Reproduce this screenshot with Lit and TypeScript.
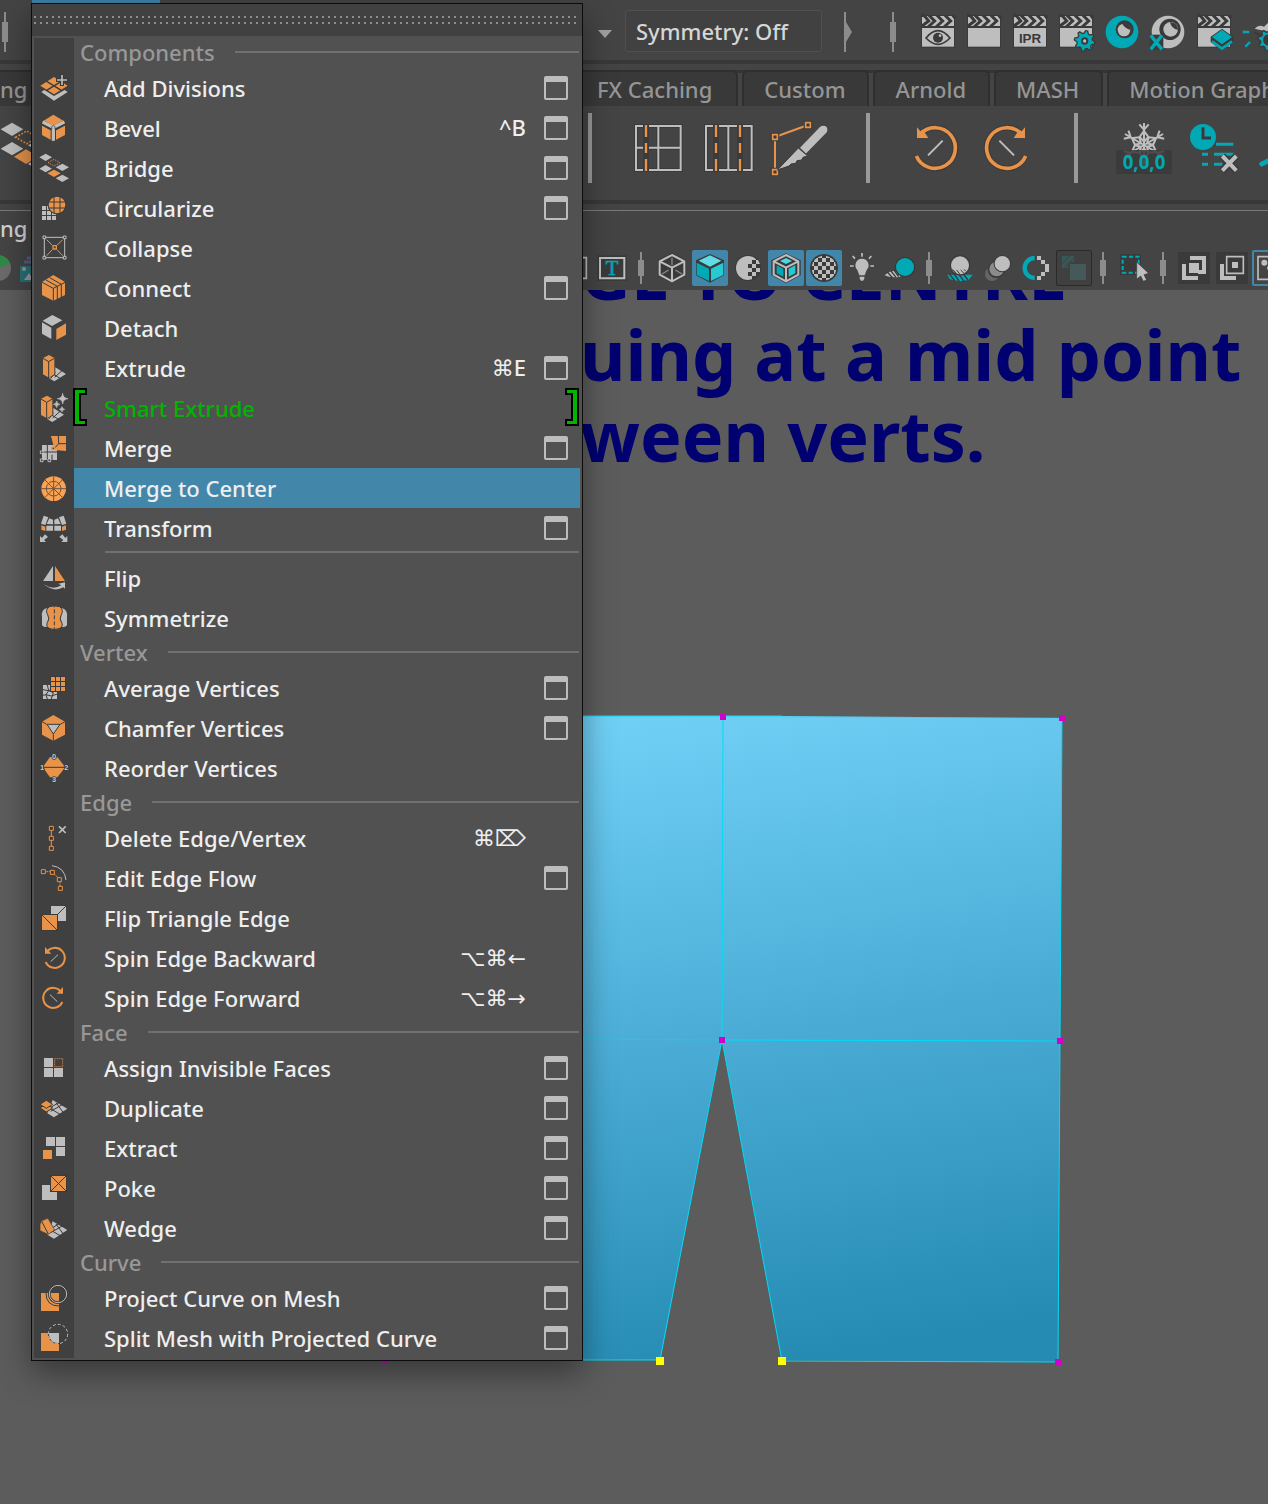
import { LitElement, html, svg, css, nothing, SVGTemplateResult } from "lit";
import { customElement, property } from "lit/decorators.js";

const O = "#e8934a";
const G = "#bebebe";
const D = "#3a3a3a";
const T = "#00a9b5";

const rhomb = (x: number, y: number, w: number, h: number) =>
  `M${x - w} ${y}L${x} ${y - h}L${x + w} ${y}L${x} ${y + h}Z`;
const box = (x: number, y: number, r: number) => `M${x - r} ${y - r}h${2 * r}v${2 * r}h${-2 * r}Z`;
const grid = (x: number, y: number, size: number, pitch: number, n: number) => {
  let d = "";
  for (let i = 0; i < n; i++) for (let j = 0; j < n; j++) d += `M${x + i * pitch} ${y + j * pitch}h${size}v${size}h${-size}Z`;
  return d;
};
const star = (x: number, y: number, r: number) =>
  `M${x} ${y - r}Q${x + 1} ${y - 1} ${x + r} ${y}Q${x + 1} ${y + 1} ${x} ${y + r}Q${x - 1} ${y + 1} ${x - r} ${y}Q${x - 1} ${y - 1} ${x} ${y - r}Z`;
const gear = (x: number, y: number, r: number) => {
  const pts: string[] = [];
  for (let i = 0; i < 32; i++) {
    const a = ((i + 0.5) * Math.PI) / 16;
    const q = i % 4 < 2 ? r : r * 0.76;
    pts.push(`${(x + q * Math.cos(a)).toFixed(1)} ${(y + q * Math.sin(a)).toFixed(1)}`);
  }
  return "M" + pts.join("L") + "Z";
};

const floorTiles = svg`<path d="M56 36L100 62L60 88L40 76Z" fill=${G}/><path d="M50 70L88 48M44 62L74 44M66 44L88 74M46 60L80 80" stroke=${D} stroke-width="3"/>`;
const prism = svg`<path d="M45 21L61 30V79L45 89L27 79V30Z" fill=${O}/><path d="M27 31L44 41L61 31M44 41V90" fill="none" stroke=${D} stroke-width="3"/>`;
const prismFloor = svg`<path d="M64 58L96 78L61 100L45 91L64 80Z" fill=${G}/><path d="M60 80L80 92M62 88L84 68M64 72L50 92" stroke=${D} stroke-width="3"/>`;
const spin = svg`<path d="M38 42A30 30 0 1 1 35 72" fill="none" stroke=${O} stroke-width="6"/><path d="M33 27V47H52Z" fill=${O}/><path d="M50 71L72 50" stroke=${G} stroke-width="3"/>`;
const transformHalf = svg`<path d="M29 23L43 28L34 51L21 47Z" fill=${G}/><path d="M22 52L34 56V69L22 65Z" fill=${O}/><path d="M46 31L57 35V49L38 48ZM37 53H57V68H37Z" fill=${G}/><path d="M18 102V84L24 90L33 79L42 87L30 96L36 102Z" fill=${G}/>`;

const menuIcons: Record<string, SVGTemplateResult> = {
  divisions: svg`<path d="M22 72L60 98L101 72L92 66L60 84L31 66Z" fill=${G}/><path d="M19 53L60 27L101 53L60 79Z" fill=${O}/><path d="M38 40L82 67M82 40L38 67" stroke=${D} stroke-width="4"/><path d="M84 18V54M66 36H102" stroke=${D} stroke-width="12"/><path d="M84 21V51M69 36H99" stroke=${G} stroke-width="5"/>`,
  bevel: svg`<path d="M58 20L93 41V81L58 100L24 81V41Z" fill=${O}/><path d="M24 44L58 62L93 44M58 60V98" fill="none" stroke=${D} stroke-width="16"/><path d="M26 42L58 58L91 42M58 60V98" fill="none" stroke=${G} stroke-width="10"/><path d="M53 64V56L58 52L63 56V64" fill="none" stroke=${D} stroke-width="2"/>`,
  bridge: svg`<path d=${rhomb(35, 28, 19, 11) + rhomb(85, 58, 20, 11) + rhomb(35, 62, 19, 11) + rhomb(85, 91, 20, 11)} fill=${G}/><path d=${rhomb(60, 44, 18, 10)} fill="none" stroke=${O} stroke-width="3" stroke-dasharray="3 3"/><path d=${rhomb(60, 76, 20, 11)} fill=${O}/>`,
  circularize: svg`<path d=${grid(24, 54, 12, 15, 3)} fill=${G}/><circle cx="69" cy="51" r="28" fill=${D}/><circle cx="69" cy="51" r="25" fill=${O}/><path d="M60 26V76M78 26V76M44 42H94M44 60H94" stroke=${D} stroke-width="3"/>`,
  collapse: svg`<path d="M31 28H92V89H31Z" fill="none" stroke=${G} stroke-width="3"/><path d=${box(31, 28, 4) + box(92, 28, 4) + box(31, 89, 4) + box(92, 89, 4)} fill=${D} stroke=${G} stroke-width="3"/><path d="M38 35L54 51M86 35L70 51M38 83L54 66M86 83L70 66" stroke=${O} stroke-width="3"/><path d=${box(62, 58, 5)} fill="none" stroke=${O} stroke-width="4"/>`,
  connect: svg`<path d="M58 21L93 42V81L58 98L24 81V42Z" fill=${O}/><path d="M24 43L58 61V98M58 61L93 43M36 36L70 55V93M47 29L82 49V87" fill="none" stroke=${D} stroke-width="3"/>`,
  detach: svg`<path d="M55 21L85 37L54 54L26 38ZM24 43L52 59V93L24 77Z" fill=${G}/><path d="M67 63L96 46V80L67 96Z" fill=${O}/>`,
  extrude: svg`${prismFloor}${prism}`,
  smart: svg`<g transform="translate(-6 2)">${prismFloor}${prism}</g><path d=${star(86, 32, 16) + star(68, 49, 10) + star(84, 64, 8)} fill=${G} stroke=${G} stroke-width="2"/>`,
  merge: svg`<path d="M24 51H69V96H24Z" fill=${G}/><path d="M40 51V96M24 72H69M54 80V96" stroke=${D} stroke-width="3"/><path d="M51 24H96V69L62 66Z" fill=${O}/><path d="M73 24L74 47L62 60M74 47H96" fill="none" stroke=${D} stroke-width="3"/><path d=${box(58, 61, 4)} fill=${D} stroke=${O} stroke-width="4"/><path d=${box(23, 73, 4) + box(23, 97, 4) + box(46, 97, 4)} fill=${D} stroke=${G} stroke-width="3"/>`,
  center: svg`<circle cx="59" cy="62" r="37" fill="#f9a254"/><circle cx="59" cy="62" r="22" fill="none" stroke="#6d5540" stroke-width="3"/><path d="M22 62H96M59 25V99M33 36L85 88M85 36L33 88" stroke="#6d5540" stroke-width="3"/>`,
  transform: svg`${transformHalf}<g transform="translate(118 0) scale(-1 1)">${transformHalf}</g>`,
  flip: svg`<path d="M57 24V69H27Z" fill=${G}/><path d="M63 24L93 69H63Z" fill=${O}/><path d="M29 79Q58 98 82 82L73 77L93 73V92L88 88Q60 104 29 79Z" fill=${G}/>`,
  symmetrize: svg`<path d="M40 30Q20 34 24 58V82Q30 90 40 86L44 58ZM82 30Q102 34 99 58V82Q93 90 83 86L79 58Z" fill=${G}/><path d="M46 26Q61 21 77 26Q90 36 82 50Q74 62 84 76Q88 88 74 92Q61 97 48 92Q36 88 39 76Q49 62 41 50Q32 36 46 26Z" fill=${O} stroke=${D} stroke-width="3"/><path d="M61 16V104" stroke=${D} stroke-width="3" stroke-dasharray="12 6"/>`,
  average: svg`<path d="M27 51H69V93H27Z" fill=${G}/><path d="M27 65L44 68L56 62M40 51L44 68L36 80L40 93M27 82L36 80L52 84L70 78M44 68L58 74L52 93" fill="none" stroke=${D} stroke-width="3"/><path d="M48 24H96V72H48Z" fill=${D}/><path d=${grid(51, 27, 12, 15, 3)} fill=${O}/>`,
  chamfer: svg`<path d="M58 21L93 41V80L58 98L24 80V41Z" fill=${O}/><path d="M24 41L38 49M93 41L79 49M58 79V98" stroke=${D} stroke-width="3"/><path d="M39 49H78L58 78Z" fill=${G} stroke=${D} stroke-width="3"/>`,
  reorder: svg`<path d="M48 27H70L94 58L70 88H48L26 58Z" fill=${O}/><path d="M26 58H94" stroke=${D} stroke-width="3"/><g class="digits"><text x="60" y="34">0</text><text x="24" y="66">1</text><text x="97" y="66">2</text><text x="60" y="102">3</text></g>`,
  delete: svg`<path d="M52 31V91" stroke=${O} stroke-width="3"/><path d=${box(52, 31, 6) + box(52, 61, 6) + box(52, 91, 6)} fill=${D} stroke=${O} stroke-width="3"/><path d="M75 25L95 45M95 25L75 45" stroke=${G} stroke-width="5"/>`,
  flow: svg`<path d="M28 41H50M60 48L76 62M78 70V88" stroke=${O} stroke-width="3" stroke-dasharray="6 3"/><path d=${box(28, 41, 6) + box(55, 43, 6) + box(76, 65, 6) + box(79, 91, 6)} fill=${D} stroke=${O} stroke-width="3"/><path d="M54 23Q92 28 96 66" fill="none" stroke=${G} stroke-width="3"/>`,
  triangle: svg`<path d="M51 24H96V69H51Z" fill=${G}/><path d="M96 24L51 69" stroke=${D} stroke-width="3"/><path d="M21 48H72V99H21Z" fill=${D}/><path d="M24 51H69V96H24Z" fill=${O}/><path d="M24 51L69 96" stroke=${D} stroke-width="3"/>`,
  back: spin,
  forward: svg`<g transform="translate(120 0) scale(-1 1)">${spin}</g>`,
  invisible: svg`<path d="M30 30h27v27h-27ZM30 60h27v27h-27ZM60 60h27v27h-27Z" fill=${G}/><path d="M62 32h24v24h-24Z" fill="none" stroke=${O} stroke-width="3" stroke-dasharray="3 3"/>`,
  duplicate: svg`${floorTiles}<path d=${rhomb(37, 60, 19, 12)} fill=${O} stroke=${D} stroke-width="3"/><path d=${rhomb(37, 49, 19, 12)} fill=${O} stroke=${D} stroke-width="3"/>`,
  extract: svg`<path d="M36 27h27v27h-27ZM66 27h27v27h-27ZM66 57h27v27h-27Z" fill=${G}/><path d="M27 66h27v27h-27Z" fill=${O}/>`,
  poke: svg`<path d="M24 51h45v45h-45Z" fill=${G}/><path d="M48 21h51v51h-51Z" fill=${D}/><path d="M51 24h45v45h-45Z" fill=${O}/><path d="M51 24L96 69M96 24L51 69" stroke=${D} stroke-width="3"/>`,
  wedge: svg`<g transform="translate(0 4)">${floorTiles}</g><path d="M18 48Q24 34 42 31L62 66L42 79L18 68Z" fill=${O} stroke=${D} stroke-width="2"/><path d="M24 42L43 78" stroke=${D} stroke-width="3"/>`,
  project: svg`<path d="M21 45h54v54h-54Z" fill=${O}/><path d="M36 45Q36 84 75 84M44 45Q44 76 75 76" fill="none" stroke=${D} stroke-width="3"/><circle cx="72" cy="48" r="26" fill="none" stroke=${D} stroke-width="8"/><circle cx="72" cy="48" r="26" fill="none" stroke=${G} stroke-width="3"/>`,
  split: svg`<path d="M21 45h54v54h-54Z" fill=${O}/><path d="M44 45H75V78Q46 76 44 45Z" fill=${G}/><circle cx="72" cy="48" r="29" fill="none" stroke=${D} stroke-width="3"/><circle cx="72" cy="48" r="29" fill="none" stroke=${G} stroke-width="3" stroke-dasharray="9 6"/>`,
};

const slate = (y: number) => svg`<path d="M3 3H105V101H3Z" fill=${D}/><path d="M6 6H102V36H6Z" fill=${G}/>
  <path d="M3 3L14 6L26 21L6 36M26 3L44 21L24 39M50 3L68 21L48 39M74 3L92 21L72 39M98 3L106 14" fill="none" stroke=${D} stroke-width="9"/><path d="M6 ${y}H102V98H6Z" fill=${G}/>`;
const cubeEdge = "M54 15L91 34V74L54 94L17 74V34Z";
const checks = (x: number, y: number, n: number, m: number, s: number) => {
  let d = "";
  for (let i = 0; i < n; i++) for (let j = 0; j < m; j++) if ((i + j) % 2 === 0) d += `M${x + i * s} ${y + j * s}h${s}v${s}h${-s}Z`;
  return d;
};

const statusIcons: [string, SVGTemplateResult][] = [
  ["Render view", svg`${slate(42)}<path d="M18 72Q54 28 90 72Q54 110 18 72Z" fill=${G} stroke=${D} stroke-width="5"/><circle cx="54" cy="71" r="15" fill=${D}/><circle cx="60" cy="65" r="4" fill=${G}/>`],
  ["Render frame", slate(42)],
  ["IPR render", svg`${slate(42)}<text class="ipr" x="54" y="87">IPR</text>`],
  ["Render settings", svg`${slate(42)}<path d=${gear(80, 81, 31)} fill=${T} stroke=${D} stroke-width="4"/><circle cx="80" cy="81" r="11" fill=${D}/><circle cx="80" cy="81" r="5" fill=${G}/>`],
  ["Hypershade", svg`<circle cx="54" cy="54" r="49" fill=${T}/><circle cx="62" cy="46" r="27" fill=${D}/><circle cx="60" cy="48" r="19" fill=${G}/><path d="M54 28Q62 44 80 48A21 21 0 0 0 54 28Z" fill=${D}/>`],
  ["Light editor", svg`<circle cx="54" cy="54" r="49" fill=${G}/><circle cx="60" cy="46" r="32" fill=${D}/><circle cx="62" cy="46" r="22" fill=${G}/><path d="M60 25Q64 44 84 48A22 22 0 0 0 60 25Z" fill=${D}/><path d="M-1 62H40V108H-1Z" fill=${D}/><path d="M2 64L36 106M36 64L2 106" stroke=${T} stroke-width="10"/>`],
  ["Render layers", svg`${slate(42)}<path d="M78 44L112 68V84L78 110L44 84V68Z" fill=${D}/><path d="M78 47L108 69L78 91L48 69Z" fill=${T}/><path d="M48 82L78 104L108 82" fill="none" stroke=${T} stroke-width="8"/>`],
  ["Light toggle", svg`<path d="M2 54H22M10 98L24 84" stroke=${T} stroke-width="7"/><path d="M38 44Q50 30 66 38L108 0V60Z" fill=${G}/><path d="M36 54Q48 62 60 66L70 50" fill="none" stroke=${D} stroke-width="5"/><path d=${gear(80, 78, 32)} fill=${T} stroke=${D} stroke-width="4"/><circle cx="80" cy="78" r="17" fill=${D}/>`],
];

const shelfSpin = svg`<path d="M58 84A61 61 0 1 1 46 150" fill="none" stroke=${D} stroke-width="17"/><path d="M58 84A61 61 0 1 1 46 150" fill="none" stroke=${O} stroke-width="11"/><path d="M48 64L58 76L66 72L82 96H48Z" fill=${O}/><path d="M81 148L125 104" stroke=${G} stroke-width="6"/>`;
const flake = [0, 60, 120, 180, 240, 300].map(
  (a) => svg`<g transform=${`translate(105 117) rotate(${a})`}><path d="M0 0V-66M-14 -62L0 -46L14 -62M0 -10L-13 -24L0 -42L13 -24Z" fill="none"/></g>`
);
const shelfGroups: [string, SVGTemplateResult][][] = [
  [
    ["Insert edge loop", svg`<path d="M39 60H173V192H39ZM106 60V192M39 125H173" fill="none" stroke=${D} stroke-width="12"/><path d="M39 60H173V192H39ZM106 60V192M39 125H173" fill="none" stroke=${G} stroke-width="6"/><path d="M69 54V198" stroke=${D} stroke-width="18"/><path d="M69 57V93M69 111V141M69 159V195" stroke=${O} stroke-width="7"/>`],
    ["Offset edge loop", svg`<path d="M39 60H176V192H39ZM106 60V192" fill="none" stroke=${D} stroke-width="12"/><path d="M39 60H176V192H39ZM106 60V192" fill="none" stroke=${G} stroke-width="6"/><path d="M69 54V198M141 54V198" stroke=${D} stroke-width="18"/><path d="M69 57V93M69 111V141M69 159V195M141 57V93M141 111V141M141 159V195" stroke=${O} stroke-width="7"/>`],
    ["Multi-cut", svg`<path d="M36 198V93L135 57" fill="none" stroke=${O} stroke-width="6"/><path d=${box(36, 93, 7) + box(135, 57, 7) + box(36, 198, 7)} fill=${D} stroke=${D} stroke-width="12"/><path d=${box(36, 93, 7) + box(135, 57, 7) + box(36, 198, 7)} fill=${D} stroke=${O} stroke-width="5"/><path d="M43 192L106 126L134 150L120 154L116 162L102 164L98 172L84 174L78 180Z" fill=${G} stroke=${D} stroke-width="3"/><path d="M120 134L180 72" stroke=${G} stroke-width="25"/><circle cx="181" cy="71" r="12" fill=${G}/>`],
  ],
  [
    ["Spin backward", shelfSpin],
    ["Spin forward", svg`<g transform="translate(210 0) scale(-1 1)">${shelfSpin}</g>`],
  ],
  [
    ["Freeze transforms", svg`<g stroke=${G} stroke-width="6">${flake}</g><path d="M21 132H189V204H21Z" fill=${D} opacity=".86"/><text class="zero" x="105" y="188">0,0,0</text>`],
    ["Delete history", svg`<circle cx="72" cy="93" r="39" fill=${T}/><path d="M72 64V96H96" fill="none" stroke=${D} stroke-width="9"/><path d="M111 115H163M69 145H87M105 145H163M69 175H87M105 175H130" stroke=${T} stroke-width="9"/><path d="M130 150L172 194M172 150L130 194" stroke=${D} stroke-width="22"/><path d="M130 150L172 194M172 150L130 194" stroke=${G} stroke-width="12"/>`],
    ["Bend", svg`<path d="M38 174Q70 162 86 140" fill="none" stroke=${T} stroke-width="14" stroke-linecap="round"/>`],
  ],
];

type Tool = { label: string; art?: SVGTemplateResult; state?: string };
const panelTools: Tool[] = [
  { label: "Gate mask", art: svg`<path d="M17 23H91V85H17Z" fill=${D} stroke=${G} stroke-width="5"/>` },
  { label: "Text overlay", art: svg`<path d="M10 16H98V92H10Z" fill=${D}/><path d="M18 24H91V85H18Z" fill="none" stroke=${G} stroke-width="6"/><text class="tee" x="54" y="75">T</text>` },
  { label: "" },
  { label: "Wireframe", art: svg`<path d=${cubeEdge} fill=${D} stroke=${D} stroke-width="12"/><path d="M54 23V46M24 72L44 60M84 72L64 60" stroke="#8a8a8a" stroke-width="4"/><path d=${cubeEdge + "M17 34L54 53L91 34M54 53V94"} fill="none" stroke=${G} stroke-width="6"/>` },
  { label: "Shaded", state: "on", art: svg`<path d="M54 12L96 31V76L54 98L12 76V31Z" fill=${D}/><path d="M54 16L88 32L54 50L20 32Z" fill="#63dbe5"/><path d="M14 38L51 56V93L14 75Z" fill=${T}/><path d="M94 38L57 56V93L94 75Z" fill="#27cad3"/>` },
  { label: "Default material", art: svg`<circle cx="54" cy="54" r="39" fill=${D}/><path d="M54 18A36 36 0 0 0 54 90Z" fill=${G}/><path d="M54 18Q68 18 78 28V30H66V42H54ZM66 42H78V54H66ZM78 30H84L90 42H78ZM54 54H66V66H54ZM78 54H90V66H78ZM66 66H78V78H66ZM54 78H66V88L54 90Z" fill=${G}/>` },
  { label: "Wireframe on shaded", state: "on", art: svg`<path d="M54 10L98 31V76L54 100L10 76V31Z" fill=${D}/><path d=${cubeEdge + "M17 34L54 53L91 34M54 53V94"} fill=${D} stroke=${G} stroke-width="6"/><path d="M54 24L72 33L54 42L36 33Z" fill="#4fd6e0"/><path d="M26 46L46 56V80L26 70Z" fill=${T}/><path d="M82 46L62 56V80L82 70Z" fill="#27cad3"/>` },
  { label: "Textured", state: "on", art: svg`<circle cx="54" cy="54" r="42" fill=${D}/><clipPath id="ball"><circle cx="54" cy="54" r="37"/></clipPath><path clip-path="url(#ball)" d=${checks(12, 12, 7, 7, 12)} fill=${G}/>` },
  { label: "Use all lights", art: svg`<path d="M54 26A20 20 0 0 1 68 60L62 76H46L40 60A20 20 0 0 1 54 26ZM47 80H61V86L57 92H51L47 86Z" fill=${G}/><path d="M54 9V20M26 18L33 26M82 18L75 26M18 48H29M90 48H79" stroke=${G} stroke-width="5"/>` },
  { label: "Shadows", art: svg`<path d="M8 76Q28 56 50 66L56 80Q30 84 14 78Z" fill=${G}/><path d="M16 66L32 84M26 62L42 82M36 60L50 80" stroke=${D} stroke-width="4"/><circle cx="69" cy="51" r="31" fill=${D}/><circle cx="69" cy="51" r="27" fill=${T}/>` },
  { label: "" },
  { label: "Ambient occlusion", art: svg`<path d="M16 74H92L80 90L54 94L24 88Z" fill=${T}/><path d="M22 72L38 92M36 72L52 94M50 72L66 94M64 72L78 90" stroke=${D} stroke-width="4"/><circle cx="54" cy="46" r="31" fill=${D}/><circle cx="54" cy="46" r="27" fill=${G}/><path d="M32 58L44 72M44 60L54 73M56 60L66 70M66 58L72 64" stroke=${D} stroke-width="3"/>` },
  { label: "Motion blur", art: svg`<circle cx="36" cy="72" r="21" fill="#656565"/><circle cx="49" cy="58" r="26" fill=${D}/><circle cx="50" cy="57" r="22" fill="#8b8b8b"/><circle cx="67" cy="41" r="26" fill=${D}/><circle cx="67" cy="41" r="23" fill=${G}/>` },
  { label: "Anti-aliasing", art: svg`<path d="M50 24A30 30 0 0 0 50 84" fill="none" stroke=${T} stroke-width="13"/><path d="M57 18H69V30H57ZM69 30H81V42H69ZM81 42H93V66H81ZM69 66H81V78H69ZM57 78H69V90H57Z" fill=${G}/>` },
  { label: "Depth peeling", state: "framed", art: svg`<path d="M18 18H54V36H36V54H18Z" fill="#38595a"/><path d="M18 42L42 18M24 54L54 24" stroke="#404848" stroke-width="4"/><path d="M42 42H90V90H42Z" fill="#45595b"/>` },
  { label: "" },
  { label: "Isolate select", art: svg`<path d="M12 12H75V75H12Z" fill=${D}/><path d="M20 20H68V68H20Z" fill="none" stroke=${T} stroke-width="6" stroke-dasharray="12 7"/><path d="M62 36L98 70L84 74L92 90L82 94L74 78L62 88Z" fill=${G} stroke=${D} stroke-width="2"/>` },
  { label: "" },
  { label: "X-ray", state: "dim", art: svg`<path d="M42 18H90V72H66V60H78V30H42Z" fill=${G}/><path d="M18 42H30V78H66V90H18Z" fill=${G}/><path d="M39 39H69V69H39Z" fill=${G}/>` },
  { label: "X-ray joints", state: "dim", art: svg`<path d="M38 20H88V70H38Z" fill="none" stroke=${G} stroke-width="5"/><path d="M18 42H30V78H66V90H18Z" fill=${G}/><path d="M54 36H72V54H54Z" fill=${G}/>` },
  { label: "Exposure", state: "outlined", art: svg`<path d="M18 20H100V88H18Z" fill="none" stroke=${G} stroke-width="5"/><circle cx="37" cy="38" r="9" fill=${G}/><circle cx="52" cy="54" r="7" fill=${G}/>` },
];

type Entry = { kind: "item" | "head" | "rule"; label?: string; icon?: string; key?: string; opt?: boolean; look?: string };
const head = (label: string): Entry => ({ kind: "head", label });
const item = (label: string, icon: string, opt = false, key = "", look = ""): Entry => ({ kind: "item", label, icon, opt, key, look });
const entries: Entry[] = [
  head("Components"),
  item("Add Divisions", "divisions", true),
  item("Bevel", "bevel", true, "^B"),
  item("Bridge", "bridge", true),
  item("Circularize", "circularize", true),
  item("Collapse", "collapse"),
  item("Connect", "connect", true),
  item("Detach", "detach"),
  item("Extrude", "extrude", true, "⌘E"),
  item("Smart Extrude", "smart", false, "", "fresh"),
  item("Merge", "merge", true),
  item("Merge to Center", "center", false, "", "active"),
  item("Transform", "transform", true),
  { kind: "rule" },
  item("Flip", "flip"),
  item("Symmetrize", "symmetrize"),
  head("Vertex"),
  item("Average Vertices", "average", true),
  item("Chamfer Vertices", "chamfer", true),
  item("Reorder Vertices", "reorder"),
  head("Edge"),
  item("Delete Edge/Vertex", "delete", false, "⌘⌦"),
  item("Edit Edge Flow", "flow", true),
  item("Flip Triangle Edge", "triangle"),
  item("Spin Edge Backward", "back", false, "⌥⌘←"),
  item("Spin Edge Forward", "forward", false, "⌥⌘→"),
  head("Face"),
  item("Assign Invisible Faces", "invisible", true),
  item("Duplicate", "duplicate", true),
  item("Extract", "extract", true),
  item("Poke", "poke", true),
  item("Wedge", "wedge", true),
  head("Curve"),
  item("Project Curve on Mesh", "project", true),
  item("Split Mesh with Projected Curve", "split", true),
];

@customElement("edit-mesh-menu")
export class EditMeshMenu extends LitElement {
  @property({ attribute: false }) entries: Entry[] = [];

  static styles = css`
    :host { display: block; box-sizing: border-box; background: #515151; border: 1px solid #0c0c0c; box-shadow: 0 12px 30px rgba(0, 0, 0, 0.4); color: #eeeeee; font: 500 22px/40px "Noto Sans", sans-serif; padding: 0 2px 2px; }
    * { box-sizing: border-box; }
    button { appearance: none; border: 0; background: none; color: inherit; font: inherit; margin: 0; padding: 0; }
    .tear { height: 32px; margin: 0 -2px; padding: 12px 4px 0 2px; background: #414141; }
    .dots { height: 8px; background: #8d8d8d; mask: conic-gradient(from 0deg at 2px 2px, transparent 75%, #000 0) 0 0 / 6px 6px; }
    .list { margin: 2px 0 0; padding: 0; list-style: none; background: linear-gradient(90deg, #404040 40px, transparent 40px); }
    .row { display: grid; grid-template-columns: 40px 1fr; height: 40px; position: relative; }
    .icon { width: 40px; height: 40px; }
    .command { display: flex; align-items: center; justify-content: space-between; height: 40px; text-align: left; padding: 0 54px 0 30px; min-width: 0; white-space: nowrap; }
    .key { font-family: "Noto Sans", "DejaVu Sans", sans-serif; line-height: 30px; padding-bottom: 2px; }
    .active .command { background: #4287aa; }
    .fresh .command { color: #00b400; }
    .option { position: absolute; right: 12px; top: 8px; width: 24px; height: 24px; border: 2px solid #bdbdbd; border-top-width: 6px; border-radius: 2px; }
    .head { display: flex; align-items: center; height: 30px; padding: 0 1px 2px 46px; gap: 20px; color: #989898; line-height: 28px; }
    .head::after { content: ""; flex: 1; height: 2px; background: #707070; }
    .rule { height: 10px; padding: 3px 1px 0 71px; }
    .rule::after { content: ""; display: block; height: 2px; background: #707070; }
    .mark { position: absolute; top: 0; width: 14px; height: 40px; }
    .open { left: 39px; }
    .close { right: 1px; }
    .digits { fill: #c8c8c8; stroke: #3a3a3a; stroke-width: 5px; paint-order: stroke; font: 700 22px "Liberation Sans", sans-serif; text-anchor: middle; }
  `;

  private row(e: Entry) {
    if (e.kind === "head") return html`<li class="head">${e.label}</li>`;
    if (e.kind === "rule") return html`<li class="rule" role="separator"></li>`;
    return html`<li class="row ${e.look}">
      <svg class="icon" viewBox="0 0 120 120" aria-hidden="true">${menuIcons[e.icon!]}</svg>
      <button class="command"><span>${e.label}</span>${e.key ? html`<span class="key">${e.key}</span>` : nothing}</button>
      ${e.opt ? html`<button class="option" aria-label="${e.label} options"></button>` : nothing}
      ${e.look === "fresh"
        ? html`<svg class="mark open" viewBox="0 0 14 40"><path d="M1 1H13V6H7V32H13V37H1Z" fill="#00b400" stroke="#000" stroke-width="2" /></svg>
            <svg class="mark close" viewBox="0 0 14 40"><path d="M13 1H1V6H7V32H1V37H13Z" fill="#00b400" stroke="#000" stroke-width="2" /></svg>`
        : nothing}
    </li>`;
  }

  render() {
    return html`<div class="tear"><div class="dots"></div></div>
      <ul class="list">${this.entries.map((e) => this.row(e))}</ul>`;
  }
}

@customElement("app-root")
export class AppRoot extends LitElement {
  static styles = css`
    :host { display: flex; flex-direction: column; position: relative; min-height: 100vh; overflow: hidden; background: #5c5c5c; font: 500 22px/30px "Noto Sans", sans-serif; color: #d0d0d0; }
    * { box-sizing: border-box; }
    button { appearance: none; border: 0; background: none; color: inherit; font: inherit; margin: 0; padding: 0; flex: none; }
    svg { display: block; overflow: visible; }
    .bar { display: grid; grid-template-columns: 583px 1fr; background: #444; }
    .bar > div { display: flex; align-items: center; min-width: 0; overflow: hidden; }
    .status { height: 64px; border-bottom: 4px solid #383838; }
    .tabs { height: 42px; padding-top: 6px; }
    .tabs > div { gap: 4px; background: linear-gradient(#343434 3px, transparent 3px); }
    .shelf { height: 98px; border-bottom: 4px solid #383838; }
    .panel { height: 86px; background: linear-gradient(transparent 6px, #7a7a7a 6px, #7a7a7a 7px, transparent 7px) #444; }
    .sep { flex: none; width: 6px; height: 40px; background: linear-gradient(#8c8c8c, #8c8c8c) center / 2px 40px no-repeat, linear-gradient(#8c8c8c, #8c8c8c) center / 6px 20px no-repeat; }
    .status .sep { margin: 4px 0 0 2px; }
    .arrow { width: 14px; height: 8px; margin: 8px 13px 0 15px; clip-path: polygon(0 0, 100% 0, 50% 100%); background: #a0a0a0; }
    .symmetry { width: 197px; height: 42px; margin-top: 2px; padding: 0 10px; border: 1px solid #505050; border-radius: 3px; background: #414141; color: #d6d6d6; font: inherit; outline: 0; }
    .fold { width: 8px; height: 40px; margin: 4px 38px 0 22px; }
    .status .icons { display: flex; gap: 10px; margin: 4px 0 0 24px; }
    .status .right .sep { margin: 4px 0 0; }
    .cell { width: 36px; height: 36px; }
    .tab { height: 36px; padding: 0 22px 0 20px; border: 2px solid #2f2f2f; border-bottom: 0; border-radius: 6px 6px 0 0; background: #393939; color: #959595; line-height: 30px; }
    .tabs .right .tab:first-child { padding-left: 14px; padding-right: 24px; border-left: 0; border-top-left-radius: 0; }
    .tabs .clip { width: 31px; padding: 0; border-radius: 0; border-width: 2px 0 0; text-align: left; }
    .divider { flex: none; width: 4px; height: 70px; margin: 0 31px 0 33px; background: #9a9a9a; }
    .shelf .right .divider:first-child { margin-left: 5px; }
    .big { width: 70px; height: 84px; }
    .shelf > div { padding-bottom: 10px; }
    .side { width: 34px; height: 60px; }
    .panel > div { gap: 2px; }
    .panel .right { padding: 42px 0 0 11px; }
    .panel .right .sep { height: 32px; margin: 0 8px 0 6px; background-size: 2px 32px, 6px 16px; }
    .panel .right button:first-child { margin-left: -38px; }
    .tool { width: 36px; height: 36px; border-radius: 2px; }
    .on { background: #4287aa; }
    .framed { border: 1px solid #2a2a2a; background: #404040; }
    .dim { background: linear-gradient(#3a3a3a, #3a3a3a) center / 32px 32px no-repeat; }
    .outlined { border: 2px solid #4287aa; }
    .framed svg { margin: -1px; }
    .outlined svg { margin: -2px; }
    .viewport { flex: 1; position: relative; overflow: hidden; min-height: 600px; }
    .mesh { position: absolute; left: 0; top: 0; width: 1268px; height: 1214px; }
    .note { position: absolute; left: 580px; top: -57px; margin: 0; color: #000070; font: 700 70px/81px "Noto Sans", sans-serif; white-space: nowrap; }
    .note span { display: block; }
    .menu { position: absolute; left: 31px; top: 3px; width: 552px; }
    .opened { position: absolute; left: 32px; top: 0; width: 128px; height: 3px; background: #3d80a6; }
    .ipr { font: 700 40px "Liberation Sans", sans-serif; text-anchor: middle; fill: #3a3a3a; }
    .zero { font: 700 56px "Noto Sans", sans-serif; text-anchor: middle; fill: #00a9b5; }
    .tee { font: 400 62px "Liberation Serif", serif; text-anchor: middle; fill: #00a9b5; stroke: #00a9b5; stroke-width: 2px; }
  `;

  render() {
    return html`
      <header class="bar status">
        <div><span class="sep"></span></div>
        <div class="right">
          <button class="arrow" aria-label="Symmetry choices"></button>
          <input class="symmetry" aria-label="Symmetry" value="Symmetry: Off" />
          <svg class="fold" viewBox="0 0 8 40"><path d="M0 0H2V10L8 20L2 30V40H0Z" fill="#8c8c8c" /></svg>
          <span class="sep"></span>
          <div class="icons">
            ${statusIcons.map(([label, art]) => html`<button class="cell" aria-label=${label}><svg class="cell" viewBox="0 0 108 108">${art}</svg></button>`)}
          </div>
        </div>
      </header>
      <nav class="bar tabs">
        <div><button class="tab clip">ng</button></div>
        <div class="right">${["FX Caching", "Custom", "Arnold", "MASH", "Motion Graphics"].map((t) => html`<button class="tab">${t}</button>`)}</div>
      </nav>
      <section class="bar shelf">
        <div>
          <svg class="side" viewBox="0 0 102 180">
            <path d=${rhomb(36, 34, 34, 20) + rhomb(36, 92, 34, 20) + rhomb(118, 82, 34, 20) + rhomb(118, 138, 34, 20)} fill=${G} />
            <path d=${rhomb(80, 58, 33, 19)} fill="none" stroke=${O} stroke-width="5" stroke-dasharray="5 5" />
            <path d=${rhomb(78, 116, 36, 22)} fill=${O} />
          </svg>
        </div>
        <div class="right">
          ${shelfGroups.map((g) => html`<span class="divider"></span>${g.map(([label, art]) => html`<button class="big" aria-label=${label}><svg class="big" viewBox="0 0 210 252">${art}</svg></button>`)}`)}
        </div>
      </section>
      <section class="bar panel">
        <div>
          <svg width="34" height="86" viewBox="0 0 34 86">
            <text x="0" y="33" fill="#d0d0d0">ng</text>
            <circle cx="-2" cy="64" r="13" fill="#6b6b6b" /><path d="M-2 64V51A13 13 0 0 1 10 60Z" fill="#2f8a44" />
            <path d="M20 62H34V78H20Z" fill="#2a7077" /><path d="M24 58H34M27 54H34" stroke="#555d85" stroke-width="3" /><circle cx="24" cy="65" r="2" fill="#999" /><path d="M24 76L29 69L34 76Z" fill="#999" />
          </svg>
        </div>
        <div class="right">
          ${panelTools.map((t) =>
            t.art
              ? html`<button class="tool ${t.state ?? ""}" aria-label=${t.label}><svg width="36" height="36" viewBox="0 0 108 108">${t.art}</svg></button>`
              : html`<span class="sep"></span>`
          )}
        </div>
      </section>
      <main class="viewport">
        <svg class="mesh" viewBox="0 290 1268 1214">
          <defs>
            <linearGradient id="sheet" x1="0.42" y1="0" x2="0.6" y2="1">
              <stop offset="0" stop-color="#70cff5" /><stop offset="0.5" stop-color="#4aacd5" /><stop offset="1" stop-color="#258bb2" />
            </linearGradient>
          </defs>
          <path d="M386 716H782L1062 718L1060 1041L1058 1362L782 1360L722 1040L660 1360H386Z" fill="url(#sheet)" />
          <g fill="none" stroke="#00dcf8" stroke-width="1">
            <path d="M386 716H782M1062 718L1060 1041L1058 1362L782 1361L722 1040L660 1360H386M723 717L722 1040L1060 1041" />
            <path d="M583 1039L722 1040M782 717L1062 718" opacity=".4" />
          </g>
          <path d=${box(723, 717, 3) + box(1062, 718, 3) + box(722, 1040, 3) + box(1060, 1041, 3) + box(1058, 1362, 3) + box(385, 1360, 3)} fill="#d400c8" />
          <path d=${box(660, 1361, 4) + box(782, 1361, 4)} fill="#ffff00" />
        </svg>
        <p class="note"><span>GE TO CENTRE</span><span>uing at a mid point</span><span>ween verts.</span></p>
      </main>
      <div class="opened"></div>
      <edit-mesh-menu class="menu" .entries=${entries}></edit-mesh-menu>
    `;
  }
}
